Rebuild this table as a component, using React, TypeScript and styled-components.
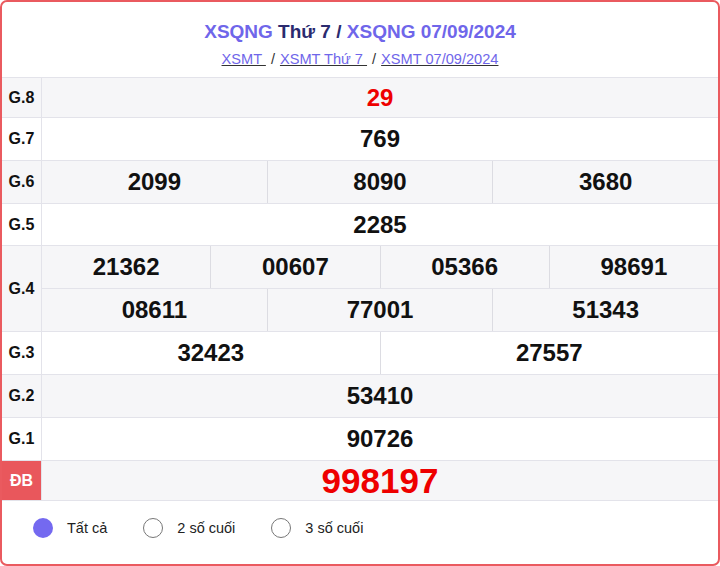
import React from "react";
import styled, { createGlobalStyle } from "styled-components";

const Global = createGlobalStyle`
  html, body { margin: 0; padding: 0; background: #fff; }
  body { font-family: "Liberation Sans", Arial, sans-serif; }
`;

const Card = styled.div`
  box-sizing: border-box;
  width: 720px;
  height: 566px;
  border: 2px solid #ea5a5f;
  border-radius: 7px;
  overflow: hidden;
  background: #fff;
`;

const Header = styled.div`
  height: 75px;
  display: flex;
  flex-direction: column;
  align-items: center;
`;

const Title = styled.h2`
  margin: 19px 0 0;
  font-size: 19px;
  line-height: 22px;
  font-weight: bold;
  color: #2b2b6f;
`;

const Accent = styled.span`
  color: #6f66ea;
`;

const Links = styled.div`
  margin-top: 8px;
  font-size: 14.6px;
  line-height: 17px;
  color: #333;
`;

const Link = styled.a`
  color: #6f66ea;
  text-decoration: underline;
  text-decoration-color: #333;
`;

const Sep = styled.span`
  margin: 0 5px;
`;

const Table = styled.div`
  border-top: 1px solid #e3e3ea;
  border-bottom: 1px solid #e3e3ea;
`;

const Row = styled.div<{ $h: number; $alt: boolean }>`
  display: flex;
  height: ${(p) => p.$h}px;
  background: ${(p) => (p.$alt ? "#f6f6f8" : "#fff")};
  & + & { border-top: 1px solid #e3e3ea; }
`;

const Label = styled.div<{ $special?: boolean }>`
  width: 39px;
  flex: none;
  display: flex;
  align-items: center;
  justify-content: center;
  font-size: 16px;
  font-weight: bold;
  border-right: 1px solid #e3e3ea;
  color: ${(p) => (p.$special ? "#fff" : "#111")};
  background: ${(p) => (p.$special ? "#e9575c" : "transparent")};
`;

const Values = styled.div`
  flex: 1;
  display: flex;
  flex-direction: column;
`;

const SubRow = styled.div`
  flex: 1;
  display: flex;
  & + & { border-top: 1px solid #e3e3ea; }
`;

const Cell = styled.div<{ $red?: boolean; $big?: boolean }>`
  flex: 1;
  display: flex;
  align-items: center;
  justify-content: center;
  font-weight: bold;
  font-size: ${(p) => (p.$big ? "35px" : "24px")};
  color: ${(p) => (p.$red ? "#ee0000" : "#111")};
  & + & { border-left: 1px solid #dcdce2; }
`;

const Options = styled.div`
  display: flex;
  align-items: center;
  height: 54px;
  padding-left: 31px;
  font-size: 14.5px;
  color: #222;
`;

const Option = styled.label`
  display: flex;
  align-items: center;
  margin-right: 36px;
`;

const Radio = styled.span<{ $checked?: boolean }>`
  box-sizing: border-box;
  width: 20px;
  height: 20px;
  border-radius: 50%;
  margin-right: 14px;
  border: ${(p) => (p.$checked ? "none" : "1px solid #777")};
  background: ${(p) => (p.$checked ? "#7469f0" : "#fff")};
`;

type Prize = { label: string; rows: string[][]; h: number; red?: boolean; big?: boolean; special?: boolean };

const prizes: Prize[] = [
  { label: "G.8", rows: [["29"]], h: 39, red: true },
  { label: "G.7", rows: [["769"]], h: 42 },
  { label: "G.6", rows: [["2099", "8090", "3680"]], h: 42 },
  { label: "G.5", rows: [["2285"]], h: 41 },
  { label: "G.4", rows: [["21362", "00607", "05366", "98691"], ["08611", "77001", "51343"]], h: 85 },
  { label: "G.3", rows: [["32423", "27557"]], h: 42 },
  { label: "G.2", rows: [["53410"]], h: 42 },
  { label: "G.1", rows: [["90726"]], h: 42 },
  { label: "ĐB", rows: [["998197"]], h: 39, red: true, big: true, special: true },
];

export default function App() {
  return (
    <>
      <Global />
      <Card>
        <Header>
          <Title>
            <Accent>XSQNG</Accent> Thứ 7 / <Accent>XSQNG 07/09/2024</Accent>
          </Title>
          <Links>
            <Link href="#">XSMT </Link>
            <Sep>/</Sep>
            <Link href="#">XSMT Thứ 7 </Link>
            <Sep>/</Sep>
            <Link href="#">XSMT 07/09/2024</Link>
          </Links>
        </Header>
        <Table>
          {prizes.map((p, i) => (
            <Row key={p.label} $h={p.h} $alt={i % 2 === 0}>
              <Label $special={p.special}>{p.label}</Label>
              <Values>
                {p.rows.map((r, j) => (
                  <SubRow key={j}>
                    {r.map((v) => (
                      <Cell key={v} $red={p.red} $big={p.big}>
                        {v}
                      </Cell>
                    ))}
                  </SubRow>
                ))}
              </Values>
            </Row>
          ))}
        </Table>
        <Options>
          <Option>
            <Radio $checked />
            Tất cả
          </Option>
          <Option>
            <Radio />
            2 số cuối
          </Option>
          <Option>
            <Radio />
            3 số cuối
          </Option>
        </Options>
      </Card>
    </>
  );
}
